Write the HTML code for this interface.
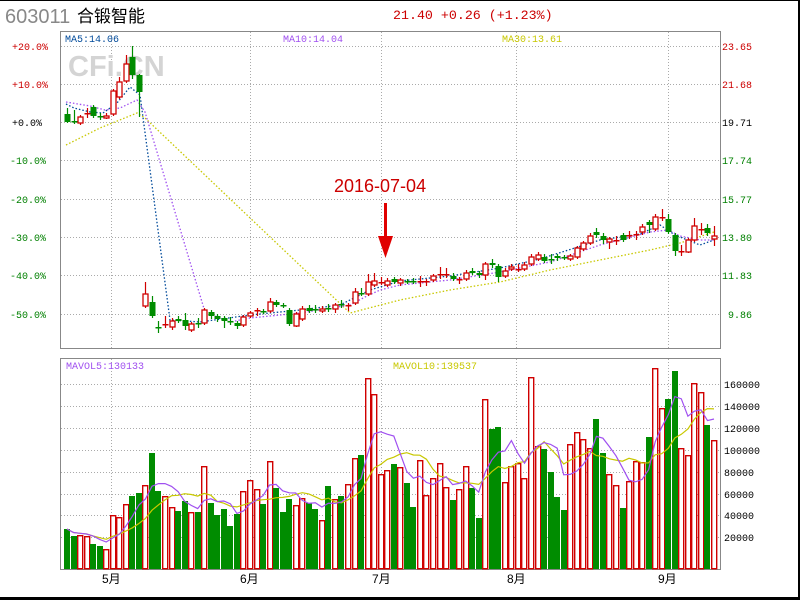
<!DOCTYPE html>
<html><head><meta charset="utf-8"><style>
html,body{margin:0;padding:0;background:#fff;}
#w{position:relative;width:800px;height:600px;overflow:hidden;background:#fff;}
svg{position:absolute;left:0;top:0;}
.m{font-family:"Liberation Mono",monospace;font-size:10px;}
</style></head><body><div id="w">
<svg id="s" width="800" height="600" xmlns="http://www.w3.org/2000/svg">
<rect x="0" y="0" width="800" height="1" fill="#000"/>
<rect x="798" y="0" width="2" height="600" fill="#000"/>
<rect x="0" y="597" width="800" height="3" fill="#000"/>
<text x="5" y="23" font-family="Liberation Sans,sans-serif" font-size="20" fill="#888">603011</text>
<text x="77" y="22" font-family="Liberation Sans,'Noto Sans CJK SC',sans-serif" font-size="17" fill="#000">合锻智能</text>
<text x="393" y="19" font-family="Liberation Mono,monospace" font-size="13.3" fill="#cc0000">21.40 +0.26 (+1.23%)</text>
<g id="grid" stroke="#aaa" stroke-dasharray="1,2" stroke-width="1"></g>
<text x="68" y="76" font-family="Liberation Sans,sans-serif" font-weight="bold" font-size="29" fill="#d4d4d4">CFi.CN</text>
<rect x="60.5" y="31.5" width="660" height="317" fill="none" stroke="#888"/>
<rect x="60.5" y="358.5" width="660" height="211" fill="none" stroke="#888"/>
<g class="m">
<text x="65" y="42" fill="#004a9a">MA5:14.06</text>
<text x="283" y="42" fill="#a050f0">MA10:14.04</text>
<text x="502" y="42" fill="#c8c800">MA30:13.61</text>
<text x="66" y="369" fill="#a050f0">MAVOL5:130133</text>
<text x="393" y="369" fill="#c8c800">MAVOL10:139537</text>
<text x="12" y="50" fill="#cc0000">+20.0%</text>
<text x="12" y="88" fill="#cc0000">+10.0%</text>
<text x="12" y="126" fill="#000">+0.0%</text>
<text x="10" y="164" fill="#008000">-10.0%</text>
<text x="10" y="203" fill="#008000">-20.0%</text>
<text x="10" y="241" fill="#008000">-30.0%</text>
<text x="10" y="279" fill="#008000">-40.0%</text>
<text x="10" y="318" fill="#008000">-50.0%</text>
<text x="722" y="50" fill="#cc0000">23.65</text>
<text x="722" y="88" fill="#cc0000">21.68</text>
<text x="722" y="126" fill="#000">19.71</text>
<text x="722" y="164" fill="#008000">17.74</text>
<text x="722" y="203" fill="#008000">15.77</text>
<text x="722" y="241" fill="#008000">13.80</text>
<text x="722" y="279" fill="#008000">11.83</text>
<text x="728" y="318" fill="#008000">9.86</text>
<text x="724" y="388" fill="#000">160000</text>
<text x="724" y="410" fill="#000">140000</text>
<text x="724" y="432" fill="#000">120000</text>
<text x="724" y="454" fill="#000">100000</text>
<text x="724" y="476" fill="#000">80000</text>
<text x="724" y="498" fill="#000">60000</text>
<text x="724" y="519" fill="#000">40000</text>
<text x="724" y="541" fill="#000">20000</text>
</g>
<g font-family="Liberation Sans,'Noto Sans CJK SC',sans-serif" font-size="12" fill="#000">
<text x="102" y="583">5月</text><text x="240" y="583">6月</text><text x="372" y="583">7月</text><text x="507" y="583">8月</text><text x="658" y="583">9月</text>
</g>
<polyline fill="none" stroke="#c8c800" stroke-width="1.3" stroke-dasharray="1.5,2" points="66,145 100,128 137,113 145,118 350,313 400,300 450,290 500,282 550,270 600,260 650,250 680,243 714,232"/>
<polyline fill="none" stroke="#a050f0" stroke-width="1.3" stroke-dasharray="1.5,2" points="66,102 90,106 105,110 120,108 137,100 145,112 205,312 230,322 250,318 300,313 350,305 365,297 380,290 400,285 450,280 500,272 550,262 600,245 650,232 668,230 680,236 700,240 714,240"/>
<polyline fill="none" stroke="#004a9a" stroke-width="1.3" stroke-dasharray="1.5,2" points="66,104 74,108 90,112 103,113 117,103 130,87 140,95 170,320 200,322 250,315 300,310 340,305 370,290 400,281 450,276 500,268 540,259 600,240 640,234 660,225 675,235 700,245 714,240"/>
<g id="c"></g>
<g id="v"></g>
<text x="334" y="192" font-family="Liberation Sans,sans-serif" font-size="18" fill="#cc0000">2016-07-04</text>
<rect x="384" y="203" width="3" height="36" fill="#e00000"/>
<polygon points="378,236 393,236 385.5,258" fill="#e00000"/>
</svg>
</div>
<script>
var NS="http://www.w3.org/2000/svg";
function el(p,t,a){var e=document.createElementNS(NS,t);for(var k in a)e.setAttribute(k,a[k]);p.appendChild(e);return e;}
var g=document.getElementById('grid');
[46,84,122,160,199,237,275,314].forEach(function(y){el(g,'line',{x1:61,x2:720,y1:y+.5,y2:y+.5});});
[384,406,428,450,472,494,515,537].forEach(function(y){el(g,'line',{x1:61,x2:720,y1:y+.5,y2:y+.5});});
[111,250,381,516,668].forEach(function(x){el(g,'line',{x1:x+.5,x2:x+.5,y1:32,y2:348});el(g,'line',{x1:x+.5,x2:x+.5,y1:359,y2:569});});
var R="#d00000",G="#008c00";
var C=[["G",114,122,108,123],["G",121,122,110,124],["R",117,123,115,125],["R",113,114,108,118],["G",107,116,105,118],["G",116,117,113,120],["R",116,118,113,119],["R",91,114,89,116],["R",82,97,77,99],["R",64,81,55,83],["G",57,75,46,79],["G",75,92,74,117],["R",294,306,282,308],["G",302,316,296,318],["G",327,327,321,333],["R",324,325,316,328],["R",321,327,318,330],["G",319,321,316,323],["G",320,326,313,330],["R",324,330,322,332],["G",323,324,318,328],["R",310,323,308,325],["G",312,316,310,319],["G",316,319,314,322],["G",318,321,316,328],["G",321,322,317,325],["G",323,326,321,329],["R",317,325,315,327],["R",313,316,311,318],["R",310,311,308,316],["G",311,312,309,314],["R",302,311,298,313],["G",302,305,300,307],["G",305,306,303,308],["G",310,324,308,326],["R",314,326,312,327],["R",309,319,306,321],["G",308,311,305,313],["G",309,310,305,313],["R",309,311,306,313],["G",308,309,304,312],["R",305,309,303,313],["G",304,305,300,308],["R",305,306,303,311],["R",292,303,288,305],["G",293,294,288,296],["R",282,294,274,296],["R",281,285,273,287],["R",282,283,277,285],["R",281,285,278,287],["G",279,282,277,284],["R",280,283,278,286],["G",281,282,279,284],["G",281,282,278,284],["R",281,282,276,287],["R",281,282,279,286],["R",276,280,274,282],["R",274,275,267,279],["R",274,275,268,278],["G",276,279,273,281],["R",279,280,277,284],["R",273,279,270,281],["G",271,273,268,275],["G",273,275,271,278],["R",264,275,262,280],["G",263,265,259,268],["G",266,277,264,282],["R",271,276,268,278],["R",267,269,264,271],["R",269,270,264,272],["R",265,269,262,271],["R",257,264,254,266],["R",255,259,252,261],["G",257,261,254,263],["G",259,260,254,264],["G",256,258,254,261],["G",257,258,255,260],["R",256,259,254,261],["R",248,257,246,259],["R",243,249,241,251],["R",236,243,233,245],["G",232,235,228,238],["G",236,240,233,244],["R",239,242,237,249],["R",240,241,236,245],["G",235,240,233,242],["R",235,236,231,239],["R",234,235,231,240],["R",227,232,224,235],["G",222,225,220,233],["R",217,229,214,231],["R",217,218,209,221],["G",219,232,214,234],["G",235,251,233,256],["R",251,252,245,256],["R",240,252,238,253],["R",226,240,218,242],["R",229,230,223,235],["G",228,233,224,236],["R",236,239,226,246]];
var cg=document.getElementById('c');
var st=647/99;
C.forEach(function(d,i){var x=Math.round(67+i*st)+.5,col=d[0]=="R"?R:G;
 el(cg,'line',{x1:x,x2:x,y1:d[3],y2:d[4],stroke:col,'stroke-width':1.2});
 var h=d[2]-d[1];
 if(h<2){el(cg,'rect',{x:x-3,y:d[1],width:6,height:1.5,fill:col});}
 else if(d[0]=="R"){el(cg,'rect',{x:x-2.5,y:d[1],width:5,height:h,fill:"#fff",stroke:col,'stroke-width':1.3});}
 else{el(cg,'rect',{x:x-3,y:d[1],width:6,height:h,fill:col});}
});
var V="G529,G536,R535,R536,G544,G546,R549,R515,R517,R504,G496,G493,R485,G453,G491,R496,R507,G511,G501,R512,G512,R466,G503,G515,G509,G526,G514,R491,R480,R489,G504,R461,G488,G512,G499,R505,R498,G503,G509,R520,G486,R499,G496,R484,R458,G455,R378,R394,R474,R470,G464,R467,G483,G507,R460,R495,R478,R463,R487,G500,R489,R466,G488,G518,R399,G429,G427,R482,R466,R463,R478,R377,R446,G449,G472,G497,G510,R444,R432,R439,R448,G419,G453,R474,R485,G508,R481,R461,R462,G437,R368,R408,G399,G371,R448,R455,R383,R392,G425,R440".split(",");
var vg=document.getElementById('v');var hs=[];
V.forEach(function(s,i){var c=s[0],t=+s.slice(1),x=Math.round(67+i*st);hs.push(569-t);
 if(c=="R")el(vg,'rect',{x:x-2.3,y:t+.7,width:5,height:568-t,fill:"#fff",stroke:R,'stroke-width':1.4});
 else el(vg,'rect',{x:x-3,y:t,width:6,height:569-t,fill:G});
});
function ma(n){var p=[];for(var i=0;i<hs.length;i++){var s=0,k=0;for(var j=Math.max(0,i-n+1);j<=i;j++){s+=hs[j];k++;}p.push((67+i*st).toFixed(1)+","+(569-s/k).toFixed(1));}return p.join(" ");}
el(vg,'polyline',{points:ma(10),fill:"none",stroke:"#c8c800","stroke-width":1.2});
el(vg,'polyline',{points:ma(5),fill:"none",stroke:"#a050f0","stroke-width":1.2});
</script>
</body></html>
